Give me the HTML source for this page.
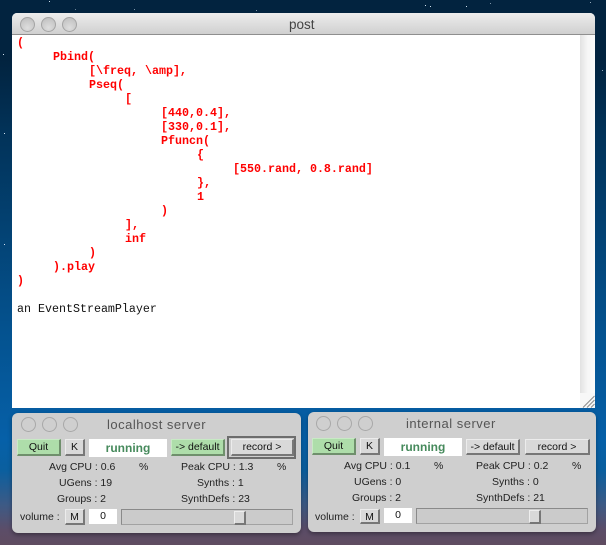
<!DOCTYPE html>
<html>
<head>
<meta charset="utf-8">
<style>
html,body{margin:0;padding:0}
body{width:606px;height:545px;overflow:hidden;position:relative;font-family:"Liberation Sans",sans-serif;
background:linear-gradient(180deg,#02233f 0,#02233f 60px,#023258 130px,#034273 230px,#04528f 330px,#0660a8 440px,#0a5f9f 470px,#3d5a85 505px,#5c4d68 530px,#5f4c60 545px)}
.a{position:absolute;white-space:nowrap}
.win{position:absolute;box-sizing:border-box}
.tb{position:absolute;background:linear-gradient(#ededed,#d0d0d0);border-bottom:1px solid #8f8f8f;box-sizing:border-box}
.dot{position:absolute;width:15px;height:15px;border-radius:50%;box-sizing:border-box;border:1px solid #a4a4a4;background:radial-gradient(circle at 50% 75%,#dedede,#bcbcbc)}
.code{font-family:"Liberation Mono",monospace;font-size:11.67px;line-height:14px;color:#f00;font-weight:bold;position:absolute;white-space:nowrap;filter:blur(.25px)}
.btn{position:absolute;box-sizing:border-box;background:#d9d9d9;border-top:1px solid #ececec;border-left:1px solid #ececec;border-right:2px solid #777;border-bottom:2px solid #777;font-size:10.5px;color:#111;text-align:center;line-height:15px;white-space:nowrap}
.g{background:#aeddaa;border-top-color:#c8eac5;border-left-color:#c8eac5;border-right-color:#6f8f6c;border-bottom-color:#6f8f6c}
.l{position:absolute;font-size:10.5px;color:#222;white-space:nowrap;line-height:12px;filter:blur(.2px)}
.srv{position:absolute;width:289px;height:120px;background:#cfcfcf;border-radius:6px;box-shadow:0 2px 4px rgba(0,0,0,.35)}
.run{position:absolute;background:#fff;color:#468a5c;font-weight:bold;font-size:12px;text-align:center;line-height:19px}
.tt{position:absolute;font-size:13px;color:#555;letter-spacing:.5px;white-space:nowrap;line-height:15px}
.sl{position:absolute;box-sizing:border-box;background:#cbcbcb;border:1px solid #a2a2a2;border-top-color:#8a8a8a;border-left-color:#8a8a8a}
.th{position:absolute;background:#d9d9d9;border-right:2px solid #777;border-bottom:2px solid #777;border-top:1px solid #eee;border-left:1px solid #eee;box-sizing:border-box}
.s{position:absolute;width:1px;height:1px;background:#cfe0ee}
</style>
</head>
<body>
<i class="s" style="left:49px;top:1px"></i><i class="s" style="left:75px;top:9px;opacity:.5"></i><i class="s" style="left:134px;top:9px;opacity:.6"></i><i class="s" style="left:256px;top:10px;opacity:.6"></i><i class="s" style="left:425px;top:5px"></i><i class="s" style="left:430px;top:6px"></i><i class="s" style="left:466px;top:6px"></i><i class="s" style="left:490px;top:3px;opacity:.6"></i><i class="s" style="left:590px;top:2px;opacity:.7"></i><i class="s" style="left:3px;top:54px"></i><i class="s" style="left:4px;top:133px"></i><i class="s" style="left:4px;top:244px"></i><i class="s" style="left:602px;top:70px;opacity:.7"></i>

<div class="win" style="left:12px;top:13px;width:583px;height:395px;background:#fff;border-radius:5px 5px 0 0;overflow:hidden">
  <div class="tb" style="left:0;top:0;width:583px;height:22px"></div>
  <div class="dot" style="left:8px;top:4px"></div>
  <div class="dot" style="left:29px;top:4px"></div>
  <div class="dot" style="left:50px;top:4px"></div>
  <div class="a" style="left:277px;top:4px;font-size:13.5px;color:#444;line-height:15px">post</div>
  <div class="a" style="left:568px;top:22px;width:15px;height:373px;background:linear-gradient(90deg,#e2e2e2,#f6f6f6 50%,#fbfbfb)"></div>
  <svg class="a" style="left:568px;top:380px" width="15" height="15" viewBox="0 0 15 15"><rect width="15" height="15" fill="#f7f7f7"/><path d="M3 14.5 14.5 3M7 14.5 14.5 7M11 14.5 14.5 11" stroke="#8a8a8a" stroke-width="1" fill="none"/></svg>
</div>

<div class="code" style="left:17px;top:36px">(</div>
<div class="code" style="left:53px;top:50px">Pbind(</div>
<div class="code" style="left:89px;top:64px">[\freq, \amp],</div>
<div class="code" style="left:89px;top:78px">Pseq(</div>
<div class="code" style="left:125px;top:92px">[</div>
<div class="code" style="left:161px;top:106px">[440,0.4],</div>
<div class="code" style="left:161px;top:120px">[330,0.1],</div>
<div class="code" style="left:161px;top:134px">Pfuncn(</div>
<div class="code" style="left:197px;top:148px">{</div>
<div class="code" style="left:233px;top:162px">[550.rand, 0.8.rand]</div>
<div class="code" style="left:197px;top:176px">},</div>
<div class="code" style="left:197px;top:190px">1</div>
<div class="code" style="left:161px;top:204px">)</div>
<div class="code" style="left:125px;top:218px">],</div>
<div class="code" style="left:125px;top:232px">inf</div>
<div class="code" style="left:89px;top:246px">)</div>
<div class="code" style="left:53px;top:260px">).play</div>
<div class="code" style="left:17px;top:274px">)</div>
<div class="code" style="left:17px;top:302px;color:#111;font-weight:normal">an EventStreamPlayer</div>

<!-- left server -->
<div class="srv" style="left:12px;top:413px">
  <div class="dot" style="left:9px;top:4px;background:#cfcfcf;border-color:#a8a8a8"></div>
  <div class="dot" style="left:30px;top:4px;background:#cfcfcf;border-color:#a8a8a8"></div>
  <div class="dot" style="left:51px;top:4px;background:#cfcfcf;border-color:#a8a8a8"></div>
  <div class="tt" style="left:95px;top:4px">localhost server</div>
  <div class="btn g" style="left:5px;top:26px;width:44px;height:17px">Quit</div>
  <div class="btn" style="left:53px;top:26px;width:20px;height:17px">K</div>
  <div class="run" style="left:77px;top:26px;width:78px;height:18px">running</div>
  <div class="btn g" style="left:159px;top:26px;width:54px;height:17px">-&gt; default</div>
  <div class="a" style="left:215px;top:23px;width:69px;height:23px;box-sizing:border-box;border:2px solid #6d6d6d"></div>
  <div class="btn" style="left:219px;top:26px;width:63px;height:17px">record &gt;</div>
  <div class="l" style="left:37px;top:48px">Avg CPU : 0.6</div><div class="l" style="left:127px;top:48px">%</div>
  <div class="l" style="left:169px;top:48px">Peak CPU : 1.3</div><div class="l" style="left:265px;top:48px">%</div>
  <div class="l" style="left:47px;top:64px">UGens : 19</div>
  <div class="l" style="left:185px;top:64px">Synths : 1</div>
  <div class="l" style="left:45px;top:80px">Groups : 2</div>
  <div class="l" style="left:169px;top:80px">SynthDefs : 23</div>
  <div class="l" style="left:8px;top:98px">volume :</div>
  <div class="btn" style="left:53px;top:96px;width:20px;height:16px">M</div>
  <div class="a" style="left:77px;top:96px;width:28px;height:15px;background:#fff;font-size:10.5px;line-height:14px;color:#111;text-align:center">0</div>
  <div class="sl" style="left:109px;top:96px;width:172px;height:16px"></div>
  <div class="th" style="left:222px;top:98px;width:12px;height:14px"></div>
</div>

<!-- right server -->
<div class="srv" style="left:308px;top:412px;width:288px">
  <div class="dot" style="left:8px;top:4px;background:#cfcfcf;border-color:#a8a8a8"></div>
  <div class="dot" style="left:29px;top:4px;background:#cfcfcf;border-color:#a8a8a8"></div>
  <div class="dot" style="left:50px;top:4px;background:#cfcfcf;border-color:#a8a8a8"></div>
  <div class="tt" style="left:98px;top:4px">internal server</div>
  <div class="btn g" style="left:4px;top:26px;width:44px;height:17px">Quit</div>
  <div class="btn" style="left:52px;top:26px;width:20px;height:17px">K</div>
  <div class="run" style="left:76px;top:26px;width:78px;height:18px">running</div>
  <div class="btn" style="left:158px;top:27px;width:54px;height:16px">-&gt; default</div>
  <div class="btn" style="left:217px;top:27px;width:65px;height:16px">record &gt;</div>
  <div class="l" style="left:36px;top:48px">Avg CPU : 0.1</div><div class="l" style="left:126px;top:48px">%</div>
  <div class="l" style="left:168px;top:48px">Peak CPU : 0.2</div><div class="l" style="left:264px;top:48px">%</div>
  <div class="l" style="left:46px;top:64px">UGens : 0</div>
  <div class="l" style="left:184px;top:64px">Synths : 0</div>
  <div class="l" style="left:44px;top:80px">Groups : 2</div>
  <div class="l" style="left:168px;top:80px">SynthDefs : 21</div>
  <div class="l" style="left:7px;top:99px">volume :</div>
  <div class="btn" style="left:52px;top:97px;width:20px;height:15px">M</div>
  <div class="a" style="left:76px;top:96px;width:28px;height:15px;background:#fff;font-size:10.5px;line-height:14px;color:#111;text-align:center">0</div>
  <div class="sl" style="left:108px;top:96px;width:172px;height:16px"></div>
  <div class="th" style="left:221px;top:98px;width:12px;height:14px"></div>
</div>
</body>
</html>
